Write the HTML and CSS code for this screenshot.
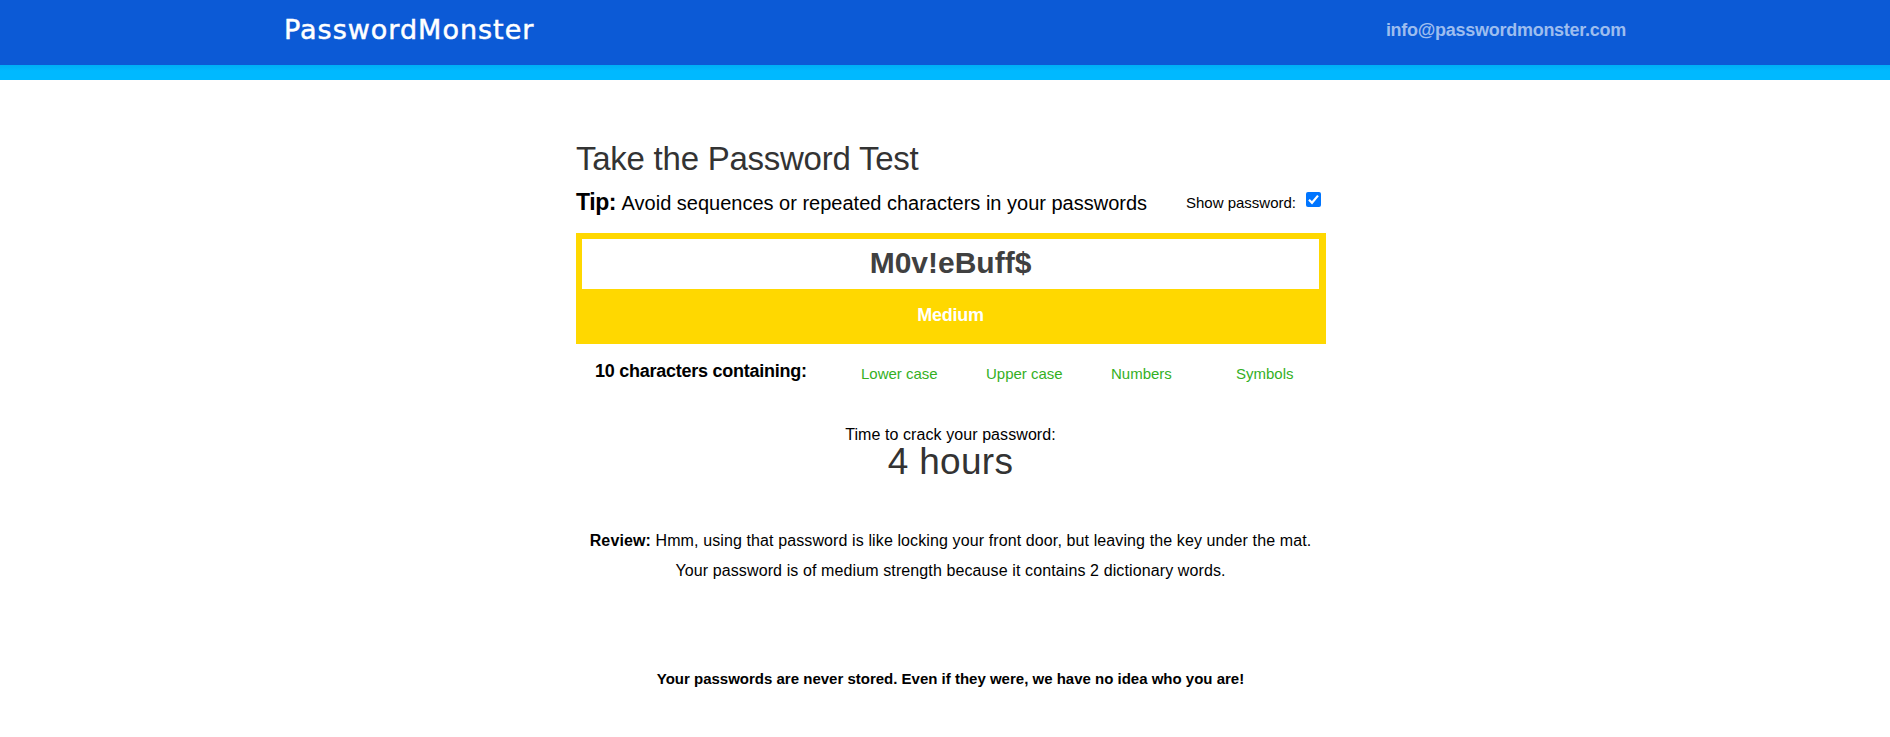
FILE: index.html
```html
<!DOCTYPE html>
<html lang="en">
<head>
<meta charset="utf-8">
<title>PasswordMonster</title>
<link rel="stylesheet" href="styles.css">
</head>
<body>
<header class="site-header">
  <div class="header-inner">
    <div class="logo">PasswordMonster</div>
    <a class="email">info@passwordmonster.com</a>
  </div>
  <div class="header-strip"></div>
</header>
<main class="content">
  <h1 class="title">Take the Password Test</h1>
  <div class="tip-row">
    <div class="tip"><b class="tip-label">Tip:</b> <span class="tip-text">Avoid sequences or repeated characters in your passwords</span></div>
    <label class="show"><span class="show-text">Show password:</span><svg class="check" viewBox="0 0 15 15"><rect width="15" height="15" rx="2" fill="#0075ff"/><path d="M3 7.8 6 10.8 12 3.6" fill="none" stroke="#fff" stroke-width="2.2"/></svg></label>
  </div>
  <section class="meter">
    <div class="password">M0v!eBuff$</div>
    <div class="strength">Medium</div>
  </section>
  <div class="sets">
    <div class="count">10 characters containing:</div>
    <div class="set">Lower case</div>
    <div class="set">Upper case</div>
    <div class="set">Numbers</div>
    <div class="set">Symbols</div>
  </div>
  <p class="crack-label">Time to crack your password:</p>
  <p class="crack-time">4 hours</p>
  <p class="review"><b>Review:</b> Hmm, using that password is like locking your front door, but leaving the key under the mat.</p>
  <p class="review">Your password is of medium strength because it contains 2 dictionary words.</p>
  <p class="privacy">Your passwords are never stored. Even if they were, we have no idea who you are!</p>
</main>
</body>
</html>
```

FILE: styles.css
```css
* { box-sizing: border-box; }
body { margin: 0; background: #fff; color: #000; font-family: "Liberation Sans", Arial, sans-serif; }
.site-header { height: 80px; background: #0c5ad6; }
.header-inner { display: flex; justify-content: space-between; width: 1342px; height: 65px; margin-left: 284px; padding-top: 11px; }
.header-strip { height: 15px; background: linear-gradient(#00aff5, #00b9ff 6px); }
.logo { font: 27px/38px "DejaVu Sans", sans-serif; letter-spacing: 1px; color: #fff; -webkit-text-stroke: .5px #fff; }
.email { font-size: 18px; font-weight: bold; line-height: 38px; letter-spacing: -.27px; color: #9dbdef; }
.content { width: 750px; margin: 0 0 0 576px; padding-top: 59px; }
.title { margin: 0; font-size: 33px; line-height: 39px; font-weight: normal; letter-spacing: -.25px; color: #333; white-space: nowrap; }
.tip-row { display: flex; justify-content: space-between; height: 55px; padding: 4px 5px 0 0; white-space: nowrap; }
.tip { line-height: 40px; }
.tip-label { font-size: 23px; letter-spacing: -.4px; }
.tip-text { margin-left: 1px; font-size: 20px; }
.show { display: flex; gap: 10px; font-size: 15px; line-height: 41px; }
.check { width: 15px; height: 15px; margin-top: 10px; }
.meter { height: 111px; padding: 6px 7px 0 6px; background: #ffd800; text-align: center; }
.password { height: 50px; background: #fff; color: #404040; font-size: 30px; font-weight: bold; line-height: 48px; }
.strength { color: #fff; font-size: 18px; font-weight: bold; line-height: 52px; letter-spacing: -.25px; }
.sets { display: grid; grid-template-columns: 266px 125px 125px 125px 90px; height: 75px; padding: 7px 0 0 19px; white-space: nowrap; }
.count { font-size: 18px; font-weight: bold; line-height: 40px; letter-spacing: -.25px; }
.set { font-size: 15px; line-height: 46px; color: #34b01f; }
.crack-label, .crack-time, .review, .privacy { margin: 0; padding-right: 1px; text-align: center; white-space: nowrap; }
.crack-label { padding-top: 5px; font-size: 16px; line-height: 22px; letter-spacing: .08px; }
.crack-time { height: 80px; font-size: 37px; line-height: 32px; letter-spacing: .3px; color: #333; }
.review { font-size: 16px; line-height: 30px; letter-spacing: .11px; }
.privacy { padding-top: 78px; font-size: 15px; font-weight: bold; line-height: 30px; }
```
